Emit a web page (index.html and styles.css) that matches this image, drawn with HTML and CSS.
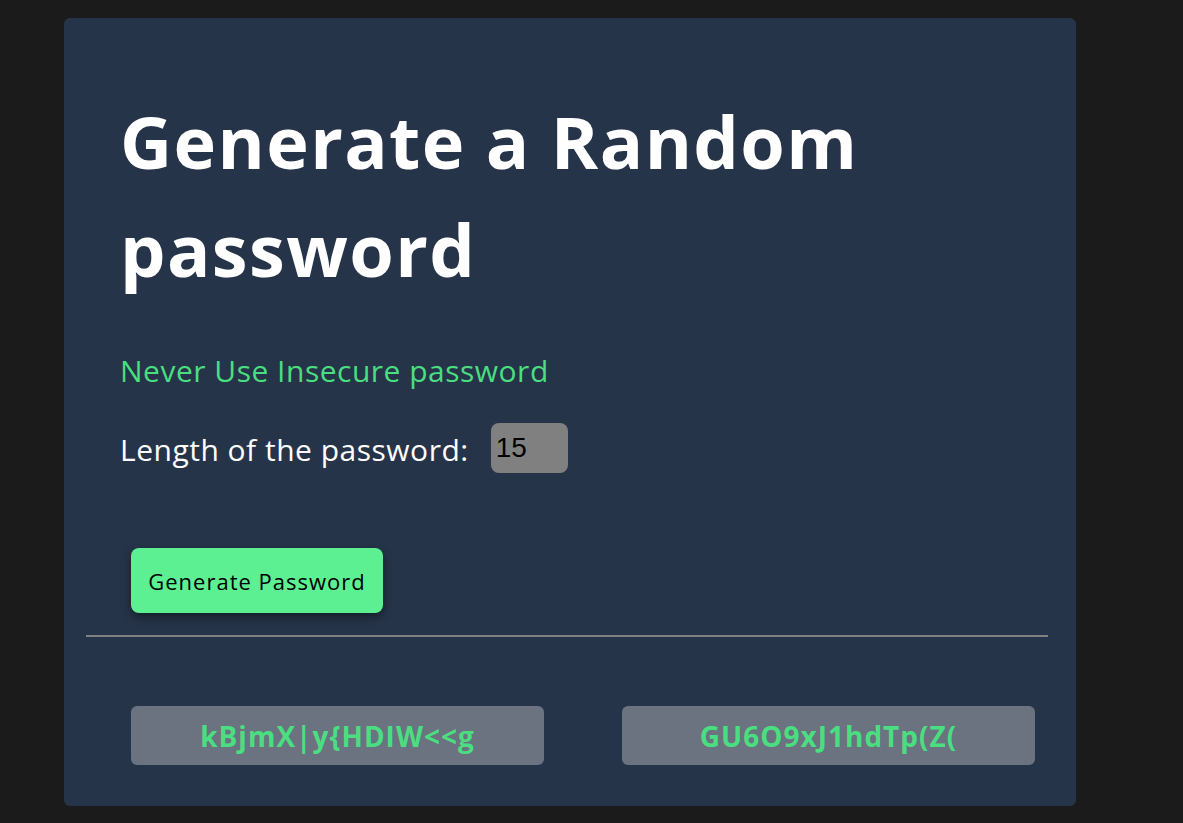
FILE: index.html
```html
<!DOCTYPE html>
<html>
<head>
<meta charset="utf-8">
<link rel="stylesheet" href="styles.css">
</head>
<body>
<main class="card">
  <h1 class="title">Generate a Random password</h1>
  <p class="tagline">Never Use Insecure password</p>
  <div class="length-row">
    <label class="length-label" for="len">Length of the password:</label>
    <input id="len" class="length-input" type="text" value="15">
  </div>
  <button class="gen-btn">Generate Password</button>
  <hr class="divider">
  <div class="results">
    <div class="pw-box">kBjmX|y{HDIW&lt;&lt;g</div>
    <div class="pw-box">GU6O9xJ1hdTp(Z(</div>
  </div>
</main>
</body>
</html>
```
FILE: styles.css
```css
html, body {
  margin: 0;
  padding: 0;
  background: #1b1b1b;
}
body {
  font-family: "Open Sans", "Noto Sans", sans-serif;
  padding-top: 18px;
  padding-left: 64px;
  height: 823px;
  box-sizing: border-box;
  overflow: hidden;
}
.card {
  width: 1012px;
  height: 788px;
  box-sizing: border-box;
  background: #263449;
  border-radius: 6px;
  padding: 69px 0 0 0;
  display: flex;
  flex-direction: column;
}
.title {
  margin: 0 56px;
  font-size: 72px;
  line-height: 108px;
  font-weight: 700;
  letter-spacing: 1.4px;
  color: #ffffff;
  max-width: 800px;
}
.tagline {
  margin: 47px 56px 0;
  font-size: 30px;
  line-height: 42px;
  letter-spacing: 0.5px;
  color: #4ade80;
}
.length-row {
  margin: 31px 56px 0;
  display: flex;
  align-items: center;
  gap: 22px;
  height: 50px;
}
.length-label {
  font-size: 30px;
  line-height: 42px;
  letter-spacing: 0.5px;
  color: #ffffff;
  padding-top: 4px;
}
.length-input {
  width: 77px;
  height: 50px;
  box-sizing: border-box;
  border: none;
  border-radius: 8px;
  background: #808080;
  color: #000;
  font-family: "Liberation Sans", Arial, sans-serif;
  font-size: 28px;
  padding: 0 5px;
  outline: none;
}
.gen-btn {
  align-self: flex-start;
  margin: 75px 0 0 67px;
  width: 252px;
  height: 65px;
  border: none;
  border-radius: 8px;
  background: #5cf092;
  color: #000;
  font-family: "Open Sans", sans-serif;
  font-size: 22px;
  letter-spacing: 1px;
  box-shadow: 0 4px 10px rgba(0, 0, 0, 0.45);
}
.divider {
  margin: 22px 28px 0 22px;
  border: none;
  height: 2px;
  background: #808080;
}
.results {
  margin: 69px 41px 0 67px;
  display: flex;
  justify-content: space-between;
}
.pw-box {
  width: 413px;
  height: 59px;
  background: #6b7280;
  border-radius: 6px;
  color: #4ade80;
  font-size: 28px;
  font-weight: 700;
  letter-spacing: 1px;
  display: flex;
  align-items: center;
  justify-content: center;
}
```
